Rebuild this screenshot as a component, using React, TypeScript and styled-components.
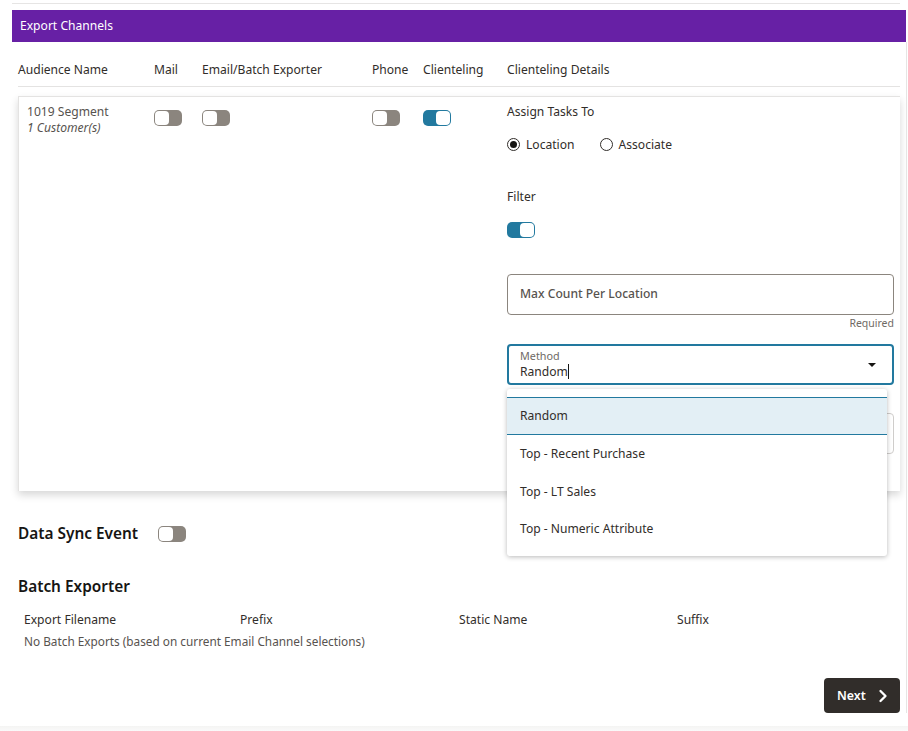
import React from "react";
import styled, { createGlobalStyle } from "styled-components";
import { ChevronRight } from "lucide-react";

const GlobalStyle = createGlobalStyle`
  html, body {
    margin: 0;
    padding: 0;
    background: #fff;
    overflow: hidden;
  }
  body {
    font-family: "Noto Sans", "Open Sans", sans-serif;
    font-size: 12.1px;
    color: #312d2a;
  }
`;

const Page = styled.div`
  position: relative;
  width: 908px;
  height: 731px;
  box-sizing: border-box;
  padding: 3px 2px 0 12px;
  overflow: hidden;
`;

const TopRule = styled.div`
  height: 1px;
  margin-right: 6px;
  background: #e6e5e4;
`;

const Banner = styled.div`
  height: 32px;
  box-sizing: border-box;
  margin-top: 6px;
  padding: 0 0 2px 8px;
  display: flex;
  align-items: center;
  background: #6720a5;
  color: #fff;
`;

const Body = styled.div`
  margin: 0 6px;
`;

const HeaderRow = styled.div`
  display: grid;
  grid-template-columns: 136px 48px 170px 51px 84px 1fr;
  height: 44px;
  box-sizing: content-box;
  align-items: center;
  border-bottom: 1px solid #e4e3e2;
  color: #312d2a;
  line-height: 56px;
`;

const Card = styled.div`
  display: grid;
  grid-template-columns: 135px 48px 170px 51px 84px 1fr;
  margin-top: 9px;
  height: 395px;
  border: 1px solid #e4e3e2;
  border-bottom: none;
  border-right: none;
  box-sizing: border-box;
  box-shadow: 0 4px 8px rgba(0, 0, 0, 0.16);
  background: #fff;
`;

const NameCell = styled.div`
  padding: 7px 0 0 8px;
  line-height: 16px;
  color: #57534f;
`;

const Italic = styled.div`
  font-style: italic;
`;

const ToggleCell = styled.div`
  padding-top: 13px;
`;

const ToggleTrack = styled.span<{ $on?: boolean }>`
  display: inline-flex;
  width: 28px;
  height: 16px;
  box-sizing: border-box;
  padding: 1px;
  border-radius: 5px;
  background: ${(p) => (p.$on ? "#22799f" : "#8b857e")};
  justify-content: ${(p) => (p.$on ? "flex-end" : "flex-start")};
`;

const ToggleKnob = styled.span`
  width: 14px;
  height: 14px;
  border-radius: 4px;
  background: #fff;
`;

const Toggle = ({ on }: { on?: boolean }) => (
  <ToggleTrack $on={on}>
    <ToggleKnob />
  </ToggleTrack>
);

const Details = styled.div`
  display: flex;
  flex-direction: column;
  padding: 6px 6px 0 0;
`;

const FieldLabel = styled.div`
  line-height: 18px;
  color: #312d2a;
`;

const RadioRow = styled.div`
  display: flex;
  align-items: center;
  margin-top: 14px;
  height: 18px;
`;

const RadioOption = styled.label`
  display: flex;
  align-items: center;
  gap: 6px;
  margin-right: 25px;
`;

const RadioCircle = styled.span<{ $on?: boolean }>`
  display: inline-flex;
  align-items: center;
  justify-content: center;
  width: 13px;
  height: 13px;
  box-sizing: border-box;
  border: 1px solid #312d2a;
  border-radius: 50%;
  &::after {
    content: "";
    display: ${(p) => (p.$on ? "block" : "none")};
    width: 7px;
    height: 7px;
    border-radius: 50%;
    background: #161513;
  }
`;

const FilterLabel = styled(FieldLabel)`
  margin-top: 35px;
`;

const FilterToggle = styled.div`
  margin-top: 16px;
  height: 16px;
`;

const TextField = styled.div`
  margin-top: 36px;
  height: 41px;
  box-sizing: border-box;
  border: 1px solid #8b857e;
  border-radius: 4px;
  padding: 0 0 2px 12px;
  display: flex;
  align-items: center;
  color: #57534f;
  font-weight: 500;
`;

const Hint = styled.div`
  text-align: right;
  font-size: 10.5px;
  line-height: 17px;
  color: #6f6a65;
`;

const SelectWrap = styled.div`
  position: relative;
  margin-top: 12px;
`;

const SelectField = styled.div`
  height: 41px;
  box-sizing: border-box;
  border: 2px solid #22799f;
  border-radius: 4px;
  padding: 3px 12px 0 11px;
  position: relative;
`;

const SelectLabel = styled.div`
  font-size: 10.8px;
  line-height: 13px;
  color: #6f6a65;
`;

const SelectValue = styled.div`
  display: flex;
  align-items: center;
  margin-top: 1px;
  line-height: 17px;
  color: #312d2a;
`;

const Caret = styled.span`
  width: 1px;
  height: 15px;
  background: #161513;
`;

const Arrow = styled.span`
  position: absolute;
  right: 16px;
  top: 17px;
  width: 0;
  height: 0;
  border-left: 4px solid transparent;
  border-right: 4px solid transparent;
  border-top: 4px solid #161513;
`;

const GhostField = styled.div`
  margin-top: 28px;
  height: 41px;
  box-sizing: border-box;
  border: 1px solid #cfcdcb;
  border-radius: 4px;
`;

const Menu = styled.div`
  position: absolute;
  left: 0;
  top: 45px;
  width: 380px;
  height: 167px;
  box-sizing: border-box;
  padding-top: 8px;
  background: #fff;
  border-radius: 3px;
  box-shadow: 0 1px 5px rgba(0, 0, 0, 0.28);
  z-index: 2;
`;

const MenuItem = styled.div<{ $active?: boolean }>`
  height: ${(p) => (p.$active ? "38px" : "37.5px")};
  box-sizing: border-box;
  padding: ${(p) => (p.$active ? "0 0 2px 13px" : "0 0 0 13px")};
  display: flex;
  align-items: center;
  color: #312d2a;
  background: ${(p) => (p.$active ? "#e3eff5" : "transparent")};
  border-top: ${(p) => (p.$active ? "1px solid #22799f" : "none")};
  border-bottom: ${(p) => (p.$active ? "1px solid #22799f" : "none")};
`;

const SyncRow = styled.div`
  display: flex;
  align-items: center;
  gap: 20px;
  margin-top: 33px;
  height: 20px;
`;

const SectionTitle = styled.div`
  font-size: 15.4px;
  font-weight: 600;
  color: #161513;
  line-height: 20px;
`;

const BatchTitle = styled(SectionTitle)`
  margin-top: 33px;
`;

const ExportHeader = styled.div`
  display: grid;
  grid-template-columns: 216px 219px 218px 1fr;
  margin-top: 14px;
  padding-left: 6px;
  line-height: 18px;
`;

const EmptyNote = styled.div`
  padding-left: 6px;
  margin-top: 3px;
  line-height: 18px;
  font-size: 11.8px;
  color: #57534f;
`;

const Footer = styled.div`
  display: flex;
  justify-content: flex-end;
  margin-top: 28px;
`;

const NextButton = styled.button`
  width: 76px;
  height: 35px;
  border: none;
  border-radius: 4px;
  padding: 0 0 0 13px;
  background: #312d2a;
  color: #fff;
  display: flex;
  align-items: center;
  gap: 7px;
  font: 600 12.4px "Noto Sans", sans-serif;
`;

const BottomBand = styled.div`
  position: absolute;
  left: 0;
  right: 0;
  bottom: 0;
  height: 5px;
  background: linear-gradient(#f4f4f3, #fafafa);
`;

const EdgeLine = styled.div`
  position: absolute;
  top: 42px;
  right: 1px;
  height: 671px;
  width: 1px;
  background: #e6e5e4;
`;

export default function App() {
  return (
    <>
      <GlobalStyle />
      <Page>
        <TopRule />
        <Banner>Export Channels</Banner>
        <Body>
          <HeaderRow>
            <div>Audience Name</div>
            <div>Mail</div>
            <div>Email/Batch Exporter</div>
            <div>Phone</div>
            <div>Clienteling</div>
            <div>Clienteling Details</div>
          </HeaderRow>
          <Card>
            <NameCell>
              <div>1019 Segment</div>
              <Italic>1 Customer(s)</Italic>
            </NameCell>
            <ToggleCell>
              <Toggle />
            </ToggleCell>
            <ToggleCell>
              <Toggle />
            </ToggleCell>
            <ToggleCell>
              <Toggle />
            </ToggleCell>
            <ToggleCell>
              <Toggle on />
            </ToggleCell>
            <Details>
              <FieldLabel>Assign Tasks To</FieldLabel>
              <RadioRow>
                <RadioOption>
                  <RadioCircle $on />
                  Location
                </RadioOption>
                <RadioOption>
                  <RadioCircle />
                  Associate
                </RadioOption>
              </RadioRow>
              <FilterLabel>Filter</FilterLabel>
              <FilterToggle>
                <Toggle on />
              </FilterToggle>
              <TextField>Max Count Per Location</TextField>
              <Hint>Required</Hint>
              <SelectWrap>
                <SelectField>
                  <SelectLabel>Method</SelectLabel>
                  <SelectValue>
                    Random
                    <Caret />
                  </SelectValue>
                  <Arrow />
                </SelectField>
                <GhostField />
                <Menu>
                  <MenuItem $active>Random</MenuItem>
                  <MenuItem>Top - Recent Purchase</MenuItem>
                  <MenuItem>Top - LT Sales</MenuItem>
                  <MenuItem>Top - Numeric Attribute</MenuItem>
                </Menu>
              </SelectWrap>
            </Details>
          </Card>
          <SyncRow>
            <SectionTitle>Data Sync Event</SectionTitle>
            <Toggle />
          </SyncRow>
          <BatchTitle>Batch Exporter</BatchTitle>
          <ExportHeader>
            <div>Export Filename</div>
            <div>Prefix</div>
            <div>Static Name</div>
            <div>Suffix</div>
          </ExportHeader>
          <EmptyNote>No Batch Exports (based on current Email Channel selections)</EmptyNote>
          <Footer>
            <NextButton>
              Next
              <ChevronRight size={20} strokeWidth={2.8} />
            </NextButton>
          </Footer>
        </Body>
        <EdgeLine />
        <BottomBand />
      </Page>
    </>
  );
}
